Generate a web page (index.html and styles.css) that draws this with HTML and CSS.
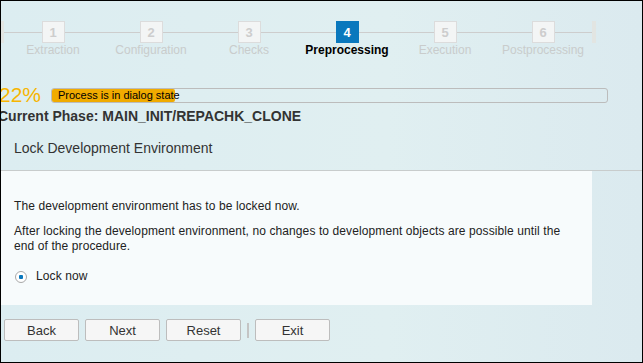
FILE: index.html
```html
<!DOCTYPE html>
<html lang="en">
<head>
    <meta charset="UTF-8">
    <title>Preprocessing</title>
    <link rel="stylesheet" href="styles.css">
</head>
<body>
    <div class="frame">
        <div class="roadmap">
            <span class="cap"></span>
            <div class="steps">
                <div class="step"><span class="num">1</span><span class="label">Extraction</span></div>
                <div class="step"><span class="num">2</span><span class="label">Configuration</span></div>
                <div class="step"><span class="num">3</span><span class="label">Checks</span></div>
                <div class="step active"><span class="num">4</span><span class="label">Preprocessing</span></div>
                <div class="step"><span class="num">5</span><span class="label">Execution</span></div>
                <div class="step"><span class="num">6</span><span class="label">Postprocessing</span></div>
            </div>
            <span class="cap"></span>
        </div>

        <div class="progress-row">
            <span class="percent">22%</span>
            <div class="bar">
                <div class="fill" style="width: 123px"></div>
                <span class="bar-text">Process is in dialog state</span>
            </div>
        </div>
        <div class="phase">Current Phase: MAIN_INIT/REPACHK_CLONE</div>

        <div class="section-title">Lock Development Environment</div>
        <div class="panel">
            <p>The development environment has to be locked now.</p>
            <p>After locking the development environment, no changes to development objects are possible until the end of the procedure.</p>
            <label class="radio">
                <span class="radio-dot"></span>
                Lock now
            </label>
        </div>

        <div class="buttons">
            <button class="btn">Back</button>
            <button class="btn">Next</button>
            <button class="btn">Reset</button>
            <span class="sep"></span>
            <button class="btn">Exit</button>
        </div>
    </div>
</body>
</html>
```

FILE: styles.css
```css
body {
    margin: 0;
    font-family: 'Liberation Sans', Arial, sans-serif;
}
.frame {
    width: 643px;
    height: 363px;
    box-sizing: border-box;
    border: 1px solid #000;
    overflow: hidden;
    background: linear-gradient(90deg, #dcedf1 0%, #e0eff1 60%, #dbeaef 100%);
    color: #333;
}
.roadmap {
    display: flex;
    align-items: flex-start;
    margin-top: 20px;
    height: 36px;
}
.cap {
    width: 4px;
    height: 22px;
    background: #e2e5e2;
}
.roadmap .cap:first-child {
    width: 3px;
}
.steps {
    display: flex;
    background: linear-gradient(#cdcdcd, #cdcdcd) no-repeat 0 11px / 100% 1px;
}
.step {
    width: 98px;
    display: flex;
    flex-direction: column;
    align-items: center;
}
.num {
    width: 23px;
    height: 22px;
    box-sizing: border-box;
    border: 1px solid #dcdcdc;
    background: #f3f5f5;
    color: #cdcdcd;
    font-size: 13px;
    font-weight: 700;
    display: flex;
    align-items: center;
    justify-content: center;
}
.label {
    font-size: 12px;
    line-height: 14px;
    color: #c9cccc;
    white-space: nowrap;
}
.step.active .num {
    background: #0a78bd;
    border-color: #0a78bd;
    color: #fff;
}
.step.active .label {
    color: #000;
    font-weight: 700;
}
.progress-row {
    display: flex;
    align-items: center;
    margin-top: 27px;
    margin-left: -2px;
}
.percent {
    font-size: 21px;
    color: #f7b500;
    width: 52px;
    line-height: 22px;
}
.bar {
    position: relative;
    width: 557px;
    height: 15px;
    box-sizing: border-box;
    border: 1px solid #bcbcbc;
    border-radius: 3px;
}
.fill {
    height: 100%;
    background: #f0ab00;
    border-radius: 2px;
}
.bar-text {
    position: absolute;
    left: 6px;
    top: 0;
    font-size: 11px;
    line-height: 13px;
    color: #000;
}
.phase {
    font-size: 14px;
    font-weight: 700;
    margin-left: -3px;
    margin-top: 2px;
    line-height: 17px;
}
.section-title {
    font-size: 14px;
    padding: 15px 0 0 13px;
    height: 46px;
    border-bottom: 1px solid #c8cccc;
    box-sizing: border-box;
}
.panel {
    width: 591px;
    height: 134px;
    box-sizing: border-box;
    background: #f7fbfc;
    padding: 28px 13px 0 13px;
    font-size: 12px;
    letter-spacing: 0.1px;
    color: #222;
    line-height: 15px;
}
.panel p {
    margin: 0 0 10px 0;
    max-width: 552px;
}
.radio {
    display: flex;
    align-items: center;
    gap: 9px;
    margin-top: 15px;
    margin-left: 1px;
}
.radio-dot {
    width: 12px;
    height: 12px;
    box-sizing: border-box;
    border: 1px solid #a9a9a9;
    border-radius: 50%;
    background: radial-gradient(circle, #0a78bd 0 2px, #fff 2.5px);
}
.buttons {
    display: flex;
    align-items: center;
    gap: 6px;
    margin-top: 14px;
    margin-left: 3px;
}
.btn {
    width: 75px;
    height: 22px;
    border: 1px solid #bdbdbd;
    border-radius: 2px;
    background: #f6f6f6;
    font-family: 'Liberation Sans', Arial, sans-serif;
    font-size: 13px;
    color: #333;
    padding: 0;
}
.sep {
    width: 2px;
    height: 15px;
    background: #c4c4c4;
}
```
